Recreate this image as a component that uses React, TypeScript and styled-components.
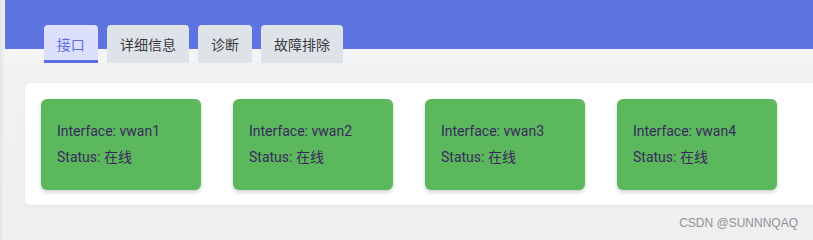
import React from 'react';
import styled, {createGlobalStyle} from 'styled-components';

const GlobalStyle = createGlobalStyle`
  html, body {
    margin: 0;
    padding: 0;
    background: #f2f3f5;
    overflow: hidden;
  }
  body {
    font-family: Roboto, "Noto Sans CJK SC", sans-serif;
  }
`;

const Page = styled.div`
  display: flex;
  width: 813px;
  height: 240px;
  overflow: hidden;
`;

const Edge = styled.div`
  flex: 0 0 5px;
  background: linear-gradient(to right, #e3e3e5, #f4f4f6);
`;

const Main = styled.div`
  flex: 1;
  display: flex;
  flex-direction: column;
  min-width: 0;
  background: linear-gradient(#f2f3f5, #eeeff1);
`;

const Header = styled.div`
  display: flex;
  gap: 9.5px;
  padding: 25px 0 0 39px;
  background: linear-gradient(#5d74e1 0 49px, #f3f4f6 49px);
`;

const Tab = styled.div<{ $active?: boolean }>`
  height: 38px;
  box-sizing: border-box;
  padding: 2px 12.8px 0;
  display: flex;
  align-items: center;
  border-radius: 4px 4px 0 0;
  font-family: "Noto Sans CJK SC", sans-serif;
  font-size: 14px;
  color: ${p => (p.$active ? '#5f6fe0' : '#3a3a3a')};
  background: ${p => (p.$active ? '#dde0fd' : '#dee3ea')};
  border-bottom: 3px solid ${p => (p.$active ? '#5d6ee3' : 'transparent')};
`;

const Panel = styled.div`
  margin: 20px 0 0 20px;
  width: 820px;
  flex-shrink: 0;
  box-sizing: border-box;
  padding: 16px 16px 15px;
  background: #fff;
  border-radius: 5px;
  box-shadow: 0 1px 4px rgba(0, 0, 0, 0.06);
  display: flex;
  gap: 32px;
`;

const Card = styled.div`
  width: 160px;
  box-sizing: border-box;
  padding: 19px 16px 20px;
  background: #5cb85c;
  border-radius: 6px;
  box-shadow: 0 2px 4px rgba(0, 0, 0, 0.2);
  color: #372b5e;
  font-size: 14px;
  line-height: 26px;
`;

const Line = styled.div`
  white-space: nowrap;
`;

const Footer = styled.div`
  display: flex;
  justify-content: flex-end;
  padding: 11px 15px 0 0;
  font-family: "Liberation Sans", Arial, sans-serif;
  font-size: 12px;
  color: #929292;
`;

const tabs = ['接口', '详细信息', '诊断', '故障排除'];
const interfaces = ['vwan1', 'vwan2', 'vwan3', 'vwan4'];

export default function App() {
  return (
    <>
      <GlobalStyle/>
      <Page>
        <Edge/>
        <Main>
          <Header>
            {tabs.map((t, i) => (
              <Tab key={t} $active={i === 0}>{t}</Tab>
            ))}
          </Header>
          <Panel>
            {interfaces.map(name => (
              <Card key={name}>
                <Line>Interface: {name}</Line>
                <Line>Status: 在线</Line>
              </Card>
            ))}
          </Panel>
          <Footer>CSDN @SUNNNQAQ</Footer>
        </Main>
      </Page>
    </>
  );
}
